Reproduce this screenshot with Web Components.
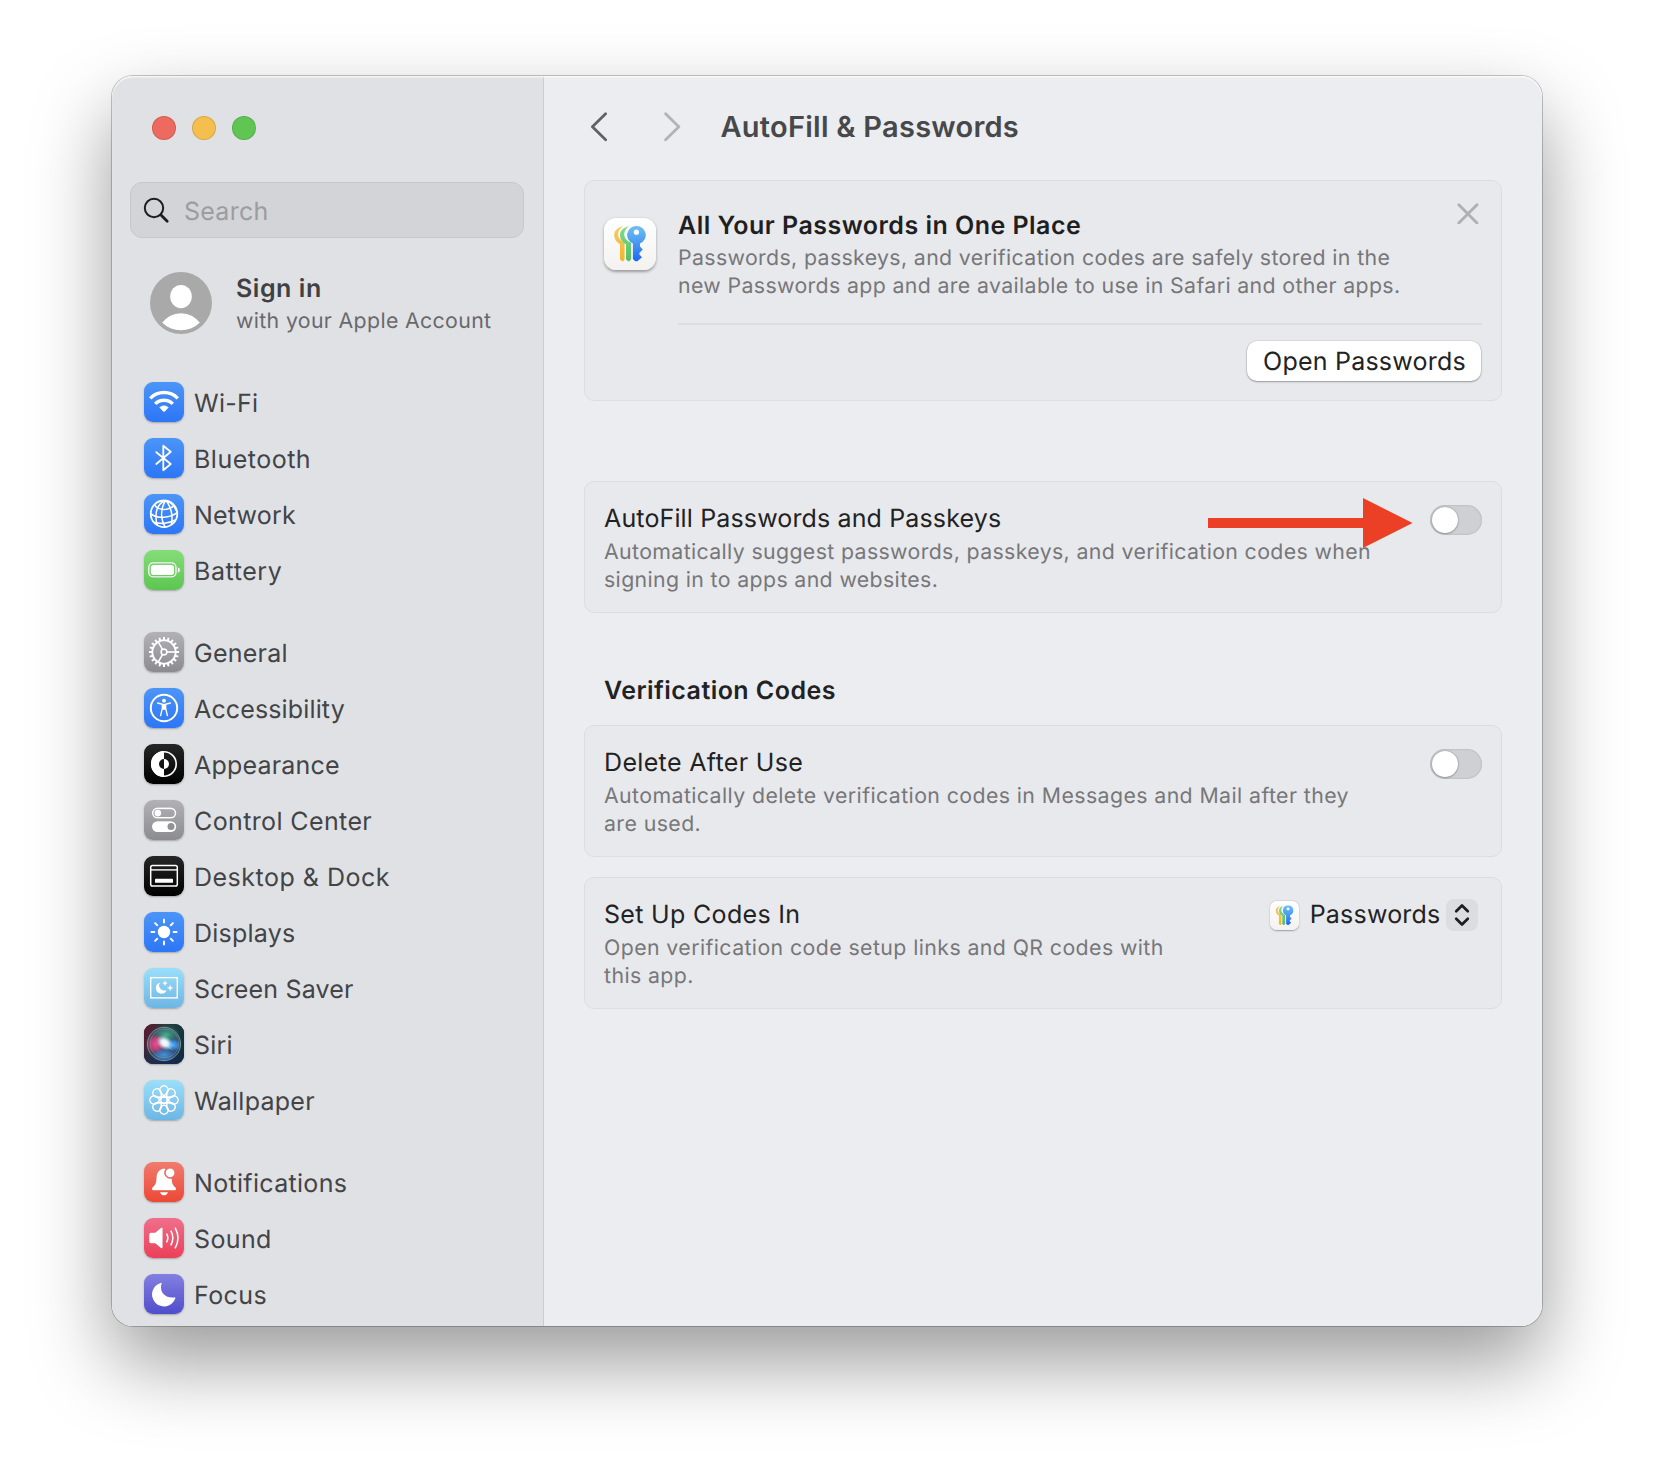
<!DOCTYPE html>
<html lang="en">
<head>
<meta charset="utf-8">
<title>AutoFill &amp; Passwords</title>
<style>
html,body{margin:0;height:100%;background:#fff}
body{font-family:Inter,"Liberation Sans",sans-serif;font-size:25px;line-height:30px;overflow:hidden;text-rendering:geometricPrecision;white-space:nowrap}
</style>
</head>
<body>
<settings-app></settings-app>
<script>
const define=(name,html,setup)=>customElements.define(name,class extends HTMLElement{
  constructor(){super();this.attachShadow({mode:'open'})}
  connectedCallback(){
    const t=document.createElement('template');
    t.innerHTML='<style>*{box-sizing:border-box}svg{display:block}</style>'+(typeof html==='function'?html(this):html);
    this.shadowRoot.replaceChildren(t.content.cloneNode(true));
    if(setup)setup(this);
  }
});

const blue=['#4b95f8','#2d76f6'],grey=['#b2b1b6','#8c8b90'],black=['#262626','#000'],sky=['#9adff9','#6cb6e6'];
const around=(n,s)=>Array.from({length:n},(_,i)=>`<g transform="rotate(${i*360/n} 20 20)">${s}</g>`).join('');
const ICONS={
wifi:[blue,`<g fill="none" stroke="#fff" stroke-width="3.4"><path d="M6.2 16.4A19.2 19.2 0 0 1 33.8 16.4"/><path d="M11.2 21.9A12.3 12.3 0 0 1 28.8 21.9"/></g><path d="M15.7 25.4A6.6 6.6 0 0 1 24.3 25.4L20.8 29.2Q20 30 19.2 29.2Z" fill="#fff" stroke="#fff" stroke-width=".6"/>`],
bluetooth:[blue,`<path d="M12.3 14.2L26.7 26L19.3 32.2V7.8L26.7 13.8L12.3 26" fill="none" stroke="#fff" stroke-width="1.9" stroke-linejoin="round" stroke-linecap="round"/>`],
network:[blue,`<g fill="none" stroke="#fff" stroke-width="1.6"><circle cx="20" cy="19.8" r="13.3" stroke-width="1.8"/><path d="M21.5 6.5C14 9 9.5 18.5 13.3 31.4M21.5 6.5C16.5 15 16.5 25 21 33M22 6.5C27 13 29.3 20.5 27.4 30.8M23 6.8C29 10 31.5 14 32.5 17"/><path d="M10.5 10.3C12.5 15.5 22 18 30.3 11.6M6.8 19.6C13 25.2 26 24 33.2 18.6M10 28.3C16 30.3 25 29.6 31.2 26"/></g>`],
battery:[['#85dd79','#5cc650'],`<rect x="4.8" y="12.9" width="27.2" height="14" rx="4.4" fill="none" stroke="#fff" stroke-width="1.4"/><rect x="6.8" y="14.9" width="23.2" height="10" rx="2.5" fill="#fff"/><path d="M33.8 17.2C36.6 18 36.6 21.9 33.8 22.7Z" fill="#fff"/>`],
general:[grey,`<g fill="none" stroke="#fff"><circle cx="20" cy="20" r="11.7" stroke-width="2"/>${around(20,'<path d="M20 4.9V8.4" stroke-width="2"/>')}<circle cx="20" cy="20" r="2.9" stroke-width="1.6"/>${around(3,'<path d="M23 20H31.4" stroke-width="1.7"/>')}</g>`],
accessibility:[blue,`<circle cx="20" cy="20" r="13.2" fill="none" stroke="#fff" stroke-width="2"/><circle cx="20" cy="12.7" r="2" fill="#fff"/><path d="M13.6 15L18.3 16.2V20.4L16.6 27.6M26.4 15L21.7 16.2V20.4L23.4 27.6" fill="none" stroke="#fff" stroke-width="1.4" stroke-linecap="round" stroke-linejoin="round"/><path d="M18 15.8H22V21.8H18Z" fill="#fff"/>`],
appearance:[black,`<circle cx="20" cy="20" r="12.2" fill="none" stroke="#fff" stroke-width="1.6"/><path d="M20 7A13 13 0 0 0 20 33V25A5 5 0 0 1 20 15Z" fill="#fff"/><path d="M20 15A5 5 0 0 1 20 25Z" fill="#fff"/>`],
control:[grey,`<rect x="8.7" y="8.4" width="22.8" height="9.4" rx="4.7" fill="none" stroke="#fff" stroke-width="1.6"/><circle cx="13.8" cy="13.1" r="3.4" fill="#fff"/><rect x="8" y="21.2" width="24.2" height="10.8" rx="5.4" fill="#fff"/><circle cx="27" cy="26.6" r="3.5" fill="#929196"/>`],
desktop:[black,`<rect x="6.7" y="9.6" width="26.6" height="20.4" rx="1.8" fill="none" stroke="#fff" stroke-width="1.5"/><path d="M7 13.9H33" stroke="#fff" stroke-width="1.4"/><rect x="11" y="22.8" width="18" height="4" rx=".6" fill="#fff"/>`],
displays:[blue,`<circle cx="20" cy="20" r="6.2" fill="#fff"/>${around(8,'<path d="M20 7.4V10.4" stroke="#fff" stroke-width="2" stroke-linecap="round"/>')}`],
saver:[sky,`<rect x="6.8" y="9.7" width="26.4" height="20.2" fill="none" stroke="#fff" stroke-width="1.5"/><path d="M16.3 14.6A5.6 5.6 0 1 0 22.8 21.7A4.9 4.9 0 0 1 16.3 14.6Z" fill="#fff"/><path d="M21 12.6Q21.2 15 23.4 15.2Q21.2 15.4 21 17.8Q20.8 15.4 18.6 15.2Q20.8 15 21 12.6ZM26.2 16.8Q26.4 19.7 29.2 19.9Q26.4 20.1 26.2 23Q26 20.1 23.2 19.9Q26 19.7 26.2 16.8Z" fill="#fff" stroke="#fff" stroke-width=".4"/>`],
siri:[['#4a1c30','#14264a'],`<defs><linearGradient id="sb" x1="0" y1=".1" x2="1" y2=".5"><stop offset="0" stop-color="#5c1530"/><stop offset=".5" stop-color="#25403f"/><stop offset="1" stop-color="#0f3440"/></linearGradient><linearGradient id="sv" x1="0" y1="0" x2="0" y2="1"><stop offset=".6" stop-color="#151f4a" stop-opacity="0"/><stop offset="1" stop-color="#1a2358" stop-opacity=".7"/></linearGradient><radialGradient id="s1"><stop offset="0" stop-color="#f04d8e"/><stop offset=".6" stop-color="#d63f78" stop-opacity=".75"/><stop offset="1" stop-color="#c02a62" stop-opacity="0"/></radialGradient><radialGradient id="s2"><stop offset="0" stop-color="#4fb4f7"/><stop offset=".6" stop-color="#3a8ae6" stop-opacity=".75"/><stop offset="1" stop-color="#2a70d0" stop-opacity="0"/></radialGradient><radialGradient id="s3"><stop offset="0" stop-color="#46b48c"/><stop offset="1" stop-color="#2a8e78" stop-opacity="0"/></radialGradient><radialGradient id="s4"><stop offset="0" stop-color="#fff"/><stop offset=".4" stop-color="#f0fcff" stop-opacity=".9"/><stop offset="1" stop-color="#9fdcf0" stop-opacity="0"/></radialGradient><clipPath id="sc"><rect width="40" height="40" rx="9"/></clipPath></defs><g clip-path="url(#sc)"><rect width="40" height="40" fill="url(#sb)"/><rect width="40" height="40" fill="url(#sv)"/><circle cx="20" cy="20" r="16.6" fill="#4a5a80" opacity=".6"/><ellipse cx="22" cy="11" rx="14" ry="10" fill="url(#s3)"/><ellipse cx="12" cy="20" rx="10" ry="10" fill="url(#s1)"/><ellipse cx="29" cy="21" rx="8.5" ry="6.5" fill="url(#s2)"/><ellipse cx="20" cy="31" rx="12" ry="7" fill="url(#s2)" opacity=".7"/><ellipse cx="20.5" cy="18.5" rx="9.5" ry="7" transform="rotate(35 20 19)" fill="url(#s4)"/><path d="M18 17L31 29L23 21Z" fill="#dff" opacity=".6"/><circle cx="20" cy="20" r="16.6" fill="none" stroke="#84a19f" stroke-width="1" opacity=".8"/><circle cx="20.5" cy="19.5" r="14.4" fill="none" stroke="#8db4b0" stroke-width=".6" opacity=".6"/></g>`],
wallpaper:[sky,`<g fill="none" stroke="#fff" stroke-width="1.6" stroke-linejoin="round">${around(8,'<path d="M21.6 17.6L16.8 12.8A4.2 4.2 0 1 1 23.2 12.8L18.4 17.6"/>')}</g>`],
notifications:[['#f07b6d','#ee4836'],`<path d="M20.6 6.6C15 7.2 12.7 10.8 12.5 15.5C12.2 21.5 11.5 22.6 8.7 25.3C7.5 26.6 7.9 28.3 9.6 28.3H30.4C32.1 28.3 32.5 26.6 31.3 25.3C28.8 22.9 28 21.4 27.7 16.4A5.9 5.9 0 0 1 21.4 7.2Z" fill="#fff"/><circle cx="26.1" cy="10.8" r="4.4" fill="#fff"/><path d="M16 30.2H24Q23 33.3 20 33.3T16 30.2Z" fill="#fff"/>`],
sound:[['#f06f8b','#ec3f58'],`<path d="M7 14.8H11.2L17 9.9Q18.6 8.9 18.6 10.8V29.1Q18.6 31 17 30L11.2 25.2H7Q5.2 25.2 5.2 23.4V16.6Q5.2 14.8 7 14.8Z" fill="#fff"/><g fill="none" stroke="#fff" stroke-width="1.6" stroke-linecap="round"><path d="M22.8 16.2Q24.9 20 22.8 23.8M27 13.2Q30.7 20 27 26.8M31.3 10.2Q36.7 20 31.3 29.8"/></g>`],
focus:[['#8380e2','#504dcc'],`<path d="M16.6 8.9C17.4 8.6 18 9.1 17.6 9.9C15.5 15 18.5 23.7 29 23.6C29.5 23.6 30 23.5 30.4 23.4C31.2 23.2 31.6 23.8 31.3 24.5A12 12 0 1 1 16.6 8.9Z" fill="#fff"/>`]
};

define('icon-tile',el=>{const [c,s]=ICONS[el.getAttribute('name')];
return `<style>:host{display:block;width:40px;height:40px;flex:none;border-radius:9px;background:linear-gradient(${c[0]},${c[1]});box-shadow:0 1px 2px rgba(0,0,0,.28)}svg{filter:drop-shadow(0 .6px .7px rgba(0,0,0,.22))}</style><svg width="40" height="40" viewBox="0 0 40 40">${s}</svg>`});

define('key-icon',el=>{const s=el.getAttribute('size')||52;
return `<style>:host{display:block;flex:none;width:${s}px;height:${s}px;border-radius:${s*.235}px;background:linear-gradient(#fff,#f3f2f0);box-shadow:0 ${s/40}px ${s/18}px rgba(0,0,0,.33)}</style>
<svg width="${s}" height="${s}" viewBox="0 0 52 52"><defs><linearGradient id="y" x1="0" y1="0" x2="0" y2="1"><stop offset="0" stop-color="#f3cd62"/><stop offset="1" stop-color="#f2b430"/></linearGradient><linearGradient id="g" x1="0" y1="0" x2="0" y2="1"><stop offset="0" stop-color="#85dc8d"/><stop offset="1" stop-color="#52bf60"/></linearGradient><linearGradient id="b" x1="0" y1="0" x2="0" y2="1"><stop offset="0" stop-color="#6fc0f3"/><stop offset=".45" stop-color="#4b9cf0"/><stop offset="1" stop-color="#1e68f2"/></linearGradient></defs>
<path d="M19.2 8.3C13.4 9.4 10.2 13 10.2 17.1C10.2 21.3 12.7 24.6 16 26.2V41.2L18 43.2H19.2L20.6 41.2V24.8C16.4 22.4 14 19.6 14.2 16C14.5 12.6 16.4 10 19.2 8.3Z" fill="url(#y)"/>
<path transform="translate(6.2 0)" d="M18.8 8.3C13 9.4 9.8 13 9.8 17.1C9.8 21.3 12.5 24.6 15.8 26.2V41.2L17.8 43.2H19.2L20.8 41.2V24.8C16.4 22.5 13.8 19.6 14 16C14.3 12.6 16 10 18.8 8.3Z" fill="url(#g)"/>
<path fill-rule="evenodd" d="M32.4 8A9 9 0 0 0 28.9 25.4V41L31.2 43.2H33.4L38 39.2L35.4 36.4V35L38.8 31.6L36 28.6V25.4A9 9 0 0 0 32.4 8ZM32.4 11.6A2.6 2.6 0 1 1 32.4 16.8A2.6 2.6 0 1 1 32.4 11.6Z" fill="url(#b)"/></svg>`});

define('window-lights',`<style>:host{display:flex;gap:16px}i{width:24px;height:24px;border-radius:50%;border:1px solid rgba(0,0,0,.12)}</style><i style="background:#ec6a5e"></i><i style="background:#f4bf4f"></i><i style="background:#61c554"></i>`);

define('search-field',`<style>:host{display:flex;align-items:center;height:56px;border-radius:12px;background:#d3d4d8;border:1px solid #c7c8cc;box-sizing:border-box;padding:0 12px;color:#9c9da1}
span{margin:3px 0 0 13px;letter-spacing:.25px}</style><svg width="28" height="28" viewBox="0 0 28 28" fill="none" stroke="#1d1d1f" stroke-linecap="round"><circle cx="11" cy="12" r="9.2" stroke-width="2"/><path d="M18 19L24.2 25.2" stroke-width="2.8"/></svg><span><slot></slot></span>`);

define('account-row',`<style>:host{display:flex;gap:24px;align-items:flex-start;height:62px}div{display:flex;flex-direction:column;padding-top:1px}
b{font-weight:600;color:#3f4042;letter-spacing:.55px;line-height:32px}small{font-size:21.3px;color:#69696c;letter-spacing:.35px;line-height:33px}</style>
<svg width="62" height="62" viewBox="0 0 62 62"><defs><clipPath id="c"><circle cx="31" cy="31" r="27.2"/></clipPath></defs><circle cx="31" cy="31" r="31" fill="#a9a9a9"/><ellipse cx="31" cy="24.6" rx="10.8" ry="11.7" fill="#fff"/><path clip-path="url(#c)" d="M11 52Q19 41.2 31 41.2T51 52V62H11Z" fill="#fff"/></svg>
<div><b><slot name="title"></slot></b><small><slot></slot></small></div>`);

define('nav-item',el=>`<style>:host{display:flex;align-items:center;gap:10px;height:40px;color:#434446}span{padding-top:4px;letter-spacing:${el.getAttribute('track')}px}</style><icon-tile name="${el.getAttribute('icon')}"></icon-tile><span><slot></slot></span>`);
define('nav-group',`<style>:host{display:flex;flex-direction:column;gap:16px}</style><slot></slot>`);

define('side-bar',`<style>:host{display:flex;flex-direction:column;width:432px;flex:none;background:#e0e1e5;border-right:1px solid #cbccd0;box-sizing:border-box;padding:40px 19px 0 18px}
window-lights{margin-left:22px}search-field{margin-top:42px}account-row{margin:34px 0 0 20px}nav{display:flex;flex-direction:column;gap:42px;margin:48px 0 0 14px}</style>
<window-lights></window-lights>
<search-field>Search</search-field>
<account-row><span slot="title">Sign in</span>with your Apple Account</account-row>
<nav>
<nav-group><nav-item icon="wifi" track=".25">Wi-Fi</nav-item><nav-item icon="bluetooth" track=".5">Bluetooth</nav-item><nav-item icon="network" track=".2">Network</nav-item><nav-item icon="battery" track=".58">Battery</nav-item></nav-group>
<nav-group><nav-item icon="general" track=".25">General</nav-item><nav-item icon="accessibility" track=".14">Accessibility</nav-item><nav-item icon="appearance" track=".2">Appearance</nav-item><nav-item icon="control" track=".38">Control Center</nav-item><nav-item icon="desktop" track=".5">Desktop &amp; Dock</nav-item><nav-item icon="displays" track=".22">Displays</nav-item><nav-item icon="saver" track=".18">Screen Saver</nav-item><nav-item icon="siri" track=".2">Siri</nav-item><nav-item icon="wallpaper" track=".28">Wallpaper</nav-item></nav-group>
<nav-group><nav-item icon="notifications" track=".32">Notifications</nav-item><nav-item icon="sound" track=".38">Sound</nav-item><nav-item icon="focus" track=".42">Focus</nav-item></nav-group>
</nav>`);

define('title-bar',`<style>:host{display:flex;align-items:center;height:102px;margin-bottom:2px}h1{margin:-1px 0 0 38.5px;font-size:29px;font-weight:600;color:#47484a;letter-spacing:.25px;line-height:36px}svg{margin-top:-1px}svg+svg{margin-left:56px}</style>
<svg width="18" height="30" viewBox="0 0 18 30" fill="none" stroke="#626265" stroke-width="2.8" stroke-linecap="round" stroke-linejoin="round"><path d="M15.6 1.8L2.4 14.8L15.6 27.8"/></svg>
<svg width="18" height="30" viewBox="0 0 18 30" fill="none" stroke="#b2b3b6" stroke-width="2.8" stroke-linecap="round" stroke-linejoin="round"><path d="M1.6 1.8L14.8 14.8L1.6 27.8"/></svg>
<h1><slot></slot></h1>`);

define('push-button',`<style>:host{display:block}button{all:unset;display:block;box-sizing:border-box;width:234px;height:40px;padding:1px 0 0 1px;border-radius:10px;background:#fff;box-shadow:0 0 0 .5px rgba(0,0,0,.12),0 1px 2px rgba(0,0,0,.3);color:#222223;text-align:center;line-height:38px;letter-spacing:.22px}</style><button><slot></slot></button>`);

define('toggle-switch',`<style>:host{display:block;flex:none;width:52px;height:30px;border-radius:15px;background:#cfd0d4;box-shadow:inset 0 0 2px rgba(0,0,0,.22);padding:2px;box-sizing:border-box}i{display:block;width:26px;height:26px;border-radius:50%;background:#fff;box-shadow:0 0 2px rgba(0,0,0,.3),0 1px 2px rgba(0,0,0,.2)}</style><i></i>`);

define('pop-up',`<style>:host{display:flex;align-items:center;color:#222223}span{margin:-1px 5.5px 0 11px;letter-spacing:.22px}i{display:grid;place-items:center;width:32px;height:32px;border-radius:8px;background:#dcdde1}</style><key-icon size="29"></key-icon><span><slot></slot></span><i><svg width="16" height="24" viewBox="0 0 16 24" fill="none" stroke="#1d1d1f" stroke-width="2.7" stroke-linecap="round" stroke-linejoin="round"><path d="M2.2 8.2L8 2.5L13.8 8.2M2.2 15.8L8 21.5L13.8 15.8"/></svg></i>`);

define('settings-card',`<style>:host{display:flex;justify-content:space-between;align-items:flex-start;box-sizing:border-box;width:918px;height:132px;border:1px solid #dcdde1;border-radius:10px;background:#e8e9ed;padding:20px 19px 0 19px}
.t{display:flex;flex-direction:column}b{font-weight:400;color:#222223;line-height:34px;letter-spacing:var(--title-track)}p{margin:2px 0 0;font-size:21.3px;line-height:28px;color:#777779;letter-spacing:var(--track,.36px)}</style>
<div class="t"><b><slot name="title"></slot></b><p><slot></slot></p></div><slot name="control"></slot>`);

define('promo-card',`<style>:host{display:flex;box-sizing:border-box;width:918px;height:221px;border:1px solid #dcdde1;border-radius:10px;background:#e8e9ed;padding:0 19px}
key-icon{margin:37px 22px 0 0}.r{flex:1;display:flex;flex-direction:column;align-items:stretch}.top{display:flex;justify-content:space-between;height:142px;border-bottom:2px solid #dcdde1;box-sizing:content-box}
.t{padding-top:28px}b{display:block;font-weight:600;color:#1f1f21;line-height:34px;letter-spacing:.48px}p{margin:1px 0 0;font-size:21.3px;line-height:28px;color:#777779;letter-spacing:.365px}.x{margin:20.5px 3.5px 0 0}push-button{align-self:flex-end;margin:16px 1px 0 0}</style>
<key-icon></key-icon><div class="r"><div class="top"><div class="t"><b><slot name="title"></slot></b><p><slot></slot></p></div><svg class="x" width="22" height="22" viewBox="0 0 22 22" stroke="#afb0b3" stroke-width="2.9" stroke-linecap="round"><path d="M1.8 2.8L20 21M20 2.8L1.8 21"/></svg></div><push-button><slot name="action"></slot></push-button></div>`);

define('red-arrow',`<style>:host{display:block;width:205px;height:50px}</style><svg width="205" height="50" viewBox="0 0 205 50"><path d="M0 20H155V0L204.6 25L155 50V30H0Z" fill="#ec4026"/></svg>`);

define('detail-pane',`<style>:host{flex:1;display:flex;flex-direction:column;background:#ecedf1;padding:0 40px}title-bar{margin-left:6px}
.a{position:relative;margin-top:80px}.a red-arrow{position:absolute;left:624px;top:17px}h2{margin:61px 0 0 20px;font-size:25px;font-weight:600;color:#222223;line-height:34px;letter-spacing:.45px}.c{margin-top:17px}.d{margin-top:20px}
toggle-switch{margin-top:3px}pop-up{margin:1px 4px 0 0}</style>
<title-bar>AutoFill &amp; Passwords</title-bar>
<promo-card><span slot="title">All Your Passwords in One Place</span>Passwords, passkeys, and verification codes are safely stored in the<br>new Passwords app and are available to use in Safari and other apps.<span slot="action">Open Passwords</span></promo-card>
<div class="a"><settings-card style="--title-track:.14px;--track:.368px"><span slot="title">AutoFill Passwords and Passkeys</span>Automatically suggest passwords, passkeys, and verification codes when<br>signing in to apps and websites.<toggle-switch slot="control"></toggle-switch></settings-card><red-arrow></red-arrow></div>
<h2>Verification Codes</h2>
<settings-card class="c" style="--title-track:.34px;--track:.41px"><span slot="title">Delete After Use</span>Automatically delete verification codes in Messages and Mail after they<br>are used.<toggle-switch slot="control"></toggle-switch></settings-card>
<settings-card class="d" style="--title-track:.32px;--track:.41px"><span slot="title">Set Up Codes In</span>Open verification code setup links and QR codes with<br>this app.<pop-up slot="control">Passwords</pop-up></settings-card>`);

define('settings-app',`<style>:host{display:block;padding:76px 112px;height:1474px;box-sizing:border-box}
.w{position:relative;display:flex;width:1430px;height:1250px;border-radius:21px;box-shadow:0 0 0 1px rgba(0,0,0,.22),0 36px 80px rgba(0,0,0,.4)}
.in{display:flex;flex:1;border-radius:21px;overflow:hidden}
.w::after{content:"";position:absolute;inset:0;border-radius:21px;box-shadow:inset 0 1.5px 1px rgba(255,255,255,.7);pointer-events:none}</style>
<div class="w"><div class="in"><side-bar></side-bar><detail-pane></detail-pane></div></div>`);
</script>
</body>
</html>
